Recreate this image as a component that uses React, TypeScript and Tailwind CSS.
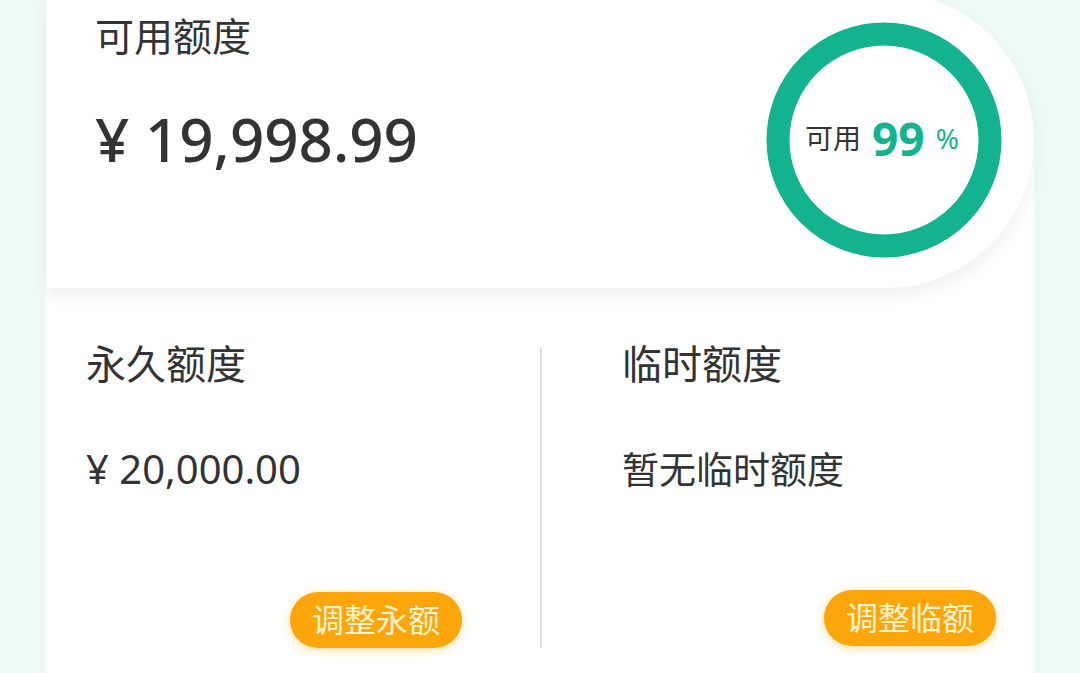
const font = { fontFamily: '"Noto Sans", "Noto Sans CJK SC", sans-serif' };

function Ring() {
    return (
        <div className="relative w-[236px] h-[236px] shrink-0">
            <svg width="236" height="236" viewBox="0 0 236 236" className="absolute inset-0">
                <circle cx="118" cy="118" r="106" fill="none" stroke="#14b38f" strokeWidth="23" />
            </svg>
            <div className="absolute inset-0 flex items-center justify-center gap-[11px] pb-[4px] pr-[4px]">
                <span className="text-[28px] text-[#333]">可用</span>
                <span className="text-[46px] font-bold leading-none text-[#14b38f]">99</span>
                <span className="text-[28px] text-[#14b38f]">%</span>
            </div>
        </div>
    );
}

function Column({ title, value, action, divider, numeric }: { title: string; value: string; action: string; divider?: boolean; numeric?: boolean }) {
    return (
        <div className={`flex flex-col h-full ${divider ? 'border-l-2 border-[#dcdcdc] pl-[80px] pr-[38px]' : 'pl-[40px] pr-[78px]'}`}>
            <div className="text-[40px] leading-none -mt-[4px] text-[#333]">{title}</div>
            <div className={`${numeric ? 'text-[40px] mt-[65px]' : 'text-[37px] mt-[67px]'} leading-none text-[#333]`}>{value}</div>
            <div className="mt-auto flex justify-end">
                <button className={`h-[56px] px-[22px] rounded-full bg-[#fda60c] text-[#fff2cf] text-[32px] leading-none shadow-[0_2px_10px_rgba(253,180,30,0.45)] ${divider ? '-translate-y-[2px]' : ''}`}>
                    {action}
                </button>
            </div>
        </div>
    );
}

export default function App() {
    return (
        <div className="w-full h-[673px] overflow-hidden bg-[#eefaf8]" style={font}>
            <div className="mx-[46px] h-full flex flex-col bg-[linear-gradient(to_bottom,transparent_140px,white_140px)]">
                {/* Summary card */}
                <div className="-mt-[8px] h-[296px] shrink-0 flex items-center justify-between bg-white rounded-bl-2xl rounded-r-full shadow-[0_8px_18px_rgba(0,0,0,0.06)] pl-[49px] pr-[32px]">
                    <div className="flex flex-col self-stretch pt-[24px]">
                        <div className="text-[39px] leading-none text-[#333]">可用额度</div>
                        <div className="text-[60px] leading-none mt-[54px] font-medium text-[#333]">¥ 19,998.99</div>
                    </div>
                    <Ring />
                </div>

                {/* Limits */}
                <div className="grid grid-cols-2 mt-[60px] h-[300px]">
                    <Column title="永久额度" value="¥ 20,000.00" action="调整永额" numeric />
                    <Column title="临时额度" value="暂无临时额度" action="调整临额" divider />
                </div>
            </div>
        </div>
    );
}
